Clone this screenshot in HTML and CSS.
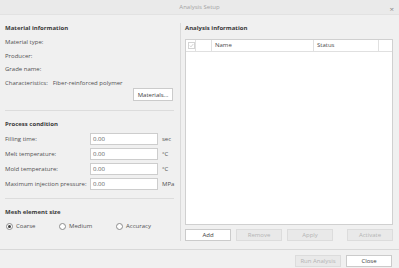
FILE: index.html
```html
<!DOCTYPE html>
<html>
<head>
<meta charset="utf-8">
<title>Analysis Setup</title>
<link rel="stylesheet" href="styles.css">
</head>
<body>
<div class="window">
  <div class="titlebar">
    <span></span>
    <span class="title">Analysis Setup</span>
    <span class="close">&#215;</span>
  </div>
  <div class="main">
    <div class="left">
      <div class="section-title">Material information</div>
      <div class="info-row">Material type:</div>
      <div class="info-row">Producer:</div>
      <div class="info-row">Grade name:</div>
      <div class="info-row"><span class="info-label">Characteristics:</span><span>Fiber-reinforced polymer</span></div>
      <div class="btn-row"><button class="btn btn-materials">Materials...</button></div>
      <div class="divider"></div>
      <div class="section-title">Process condition</div>
      <div class="form">
        <div class="field"><span class="field-label">Filling time:</span><span class="input">0.00</span><span class="unit">sec</span></div>
        <div class="field"><span class="field-label">Melt temperature:</span><span class="input">0.00</span><span class="unit">°C</span></div>
        <div class="field"><span class="field-label">Mold temperature:</span><span class="input">0.00</span><span class="unit">°C</span></div>
        <div class="field"><span class="field-label">Maximum injection pressure:</span><span class="input">0.00</span><span class="unit">MPa</span></div>
      </div>
      <div class="divider divider-mesh"></div>
      <div class="section-title">Mesh element size</div>
      <div class="radios">
        <label class="radio"><span class="radio-dot checked"></span><span>Coarse</span></label>
        <label class="radio"><span class="radio-dot"></span><span>Medium</span></label>
        <label class="radio"><span class="radio-dot"></span><span>Accuracy</span></label>
      </div>
    </div>
    <div class="right">
      <div class="section-title">Analysis information</div>
      <div class="table">
        <div class="thead">
          <div class="th th-check"><span class="checkbox"><svg width="5" height="5" viewBox="0 0 5 5"><path d="M0.8 2.6 L2 3.8 L4.3 1" fill="none" stroke="#c8c8c8" stroke-width="0.8"/></svg></span></div>
          <div class="th"></div>
          <div class="th th-name">Name</div>
          <div class="th th-status">Status</div>
          <div class="th th-last"></div>
        </div>
      </div>
      <div class="table-actions">
        <button class="btn">Add</button>
        <button class="btn disabled">Remove</button>
        <button class="btn disabled">Apply</button>
        <button class="btn disabled btn-activate">Activate</button>
      </div>
    </div>
  </div>
  <div class="footer">
    <button class="btn disabled">Run Analysis</button>
    <button class="btn">Close</button>
  </div>
</div>
</body>
</html>
```

FILE: styles.css
```css
html, body {
  margin: 0;
  padding: 0;
}

body {
  width: 399px;
  height: 268px;
  background: #f0f0f0;
  font-family: "Open Sans", "Noto Sans", sans-serif;
  font-size: 6px;
  color: #505050;
  overflow: hidden;
}

.window {
  display: flex;
  flex-direction: column;
  height: 268px;
}

.titlebar {
  height: 14px;
  border-bottom: 1px solid #e2e2e2;
  background: #eaeaea;
  display: grid;
  grid-template-columns: 1fr auto 1fr;
  align-items: center;
}

.title {
  color: #a4a4a4;
  font-size: 6px;
}

.close {
  justify-self: end;
  margin-right: 5px;
  color: #8a8a8a;
  font-size: 8px;
  line-height: 8px;
  margin-top: 3px;
}

.main {
  flex: 1;
  display: flex;
  padding: 8px 0 8px;
}

.left {
  width: 181px;
  box-sizing: border-box;
  padding: 0 6px 0 5px;
  border-right: 1px solid #dadada;
  display: flex;
  flex-direction: column;
}

.section-title {
  font-weight: bold;
  color: #3a3a3a;
  line-height: 10px;
  height: 10px;
}

.left > .section-title:first-child {
  margin-bottom: 3px;
}

.info-row {
  line-height: 13.5px;
  height: 13.5px;
  white-space: nowrap;
}

.info-label {
  margin-right: 5px;
}

.btn-row {
  display: flex;
  justify-content: flex-end;
  margin-top: -2px;
  padding-right: 1px;
}

.btn {
  font-family: inherit;
  font-size: 6px;
  height: 12px;
  width: 46px;
  padding: 0;
  margin: 0;
  border: 1px solid #cbcbcb;
  background: #ffffff;
  color: #3e3e3e;
  line-height: 10px;
}

.btn-materials {
  width: 40px;
  height: 13px;
}

.btn.disabled {
  background: #e9e9e9;
  border-color: #dcdcdc;
  color: #b4b4b4;
}

.divider {
  height: 1px;
  background: #dcdcdc;
  margin: 9px 0 8px;
}

.form {
  margin-top: 4px;
  display: flex;
  flex-direction: column;
  gap: 3px;
}

.field {
  display: grid;
  grid-template-columns: 85px 68px auto;
  align-items: center;
  height: 12px;
}

.field-label {
  white-space: nowrap;
}

.input {
  box-sizing: border-box;
  height: 12px;
  border: 1px solid #cdcdcd;
  background: #ffffff;
  padding-left: 2px;
  line-height: 10px;
  color: #5a5a5a;
}

.unit {
  padding-left: 4px;
}

.divider-mesh {
  margin-top: 8px;
}

.radios {
  margin-top: 3px;
  display: grid;
  grid-template-columns: 53px 57px auto;
  height: 12px;
  align-items: center;
}

.radio {
  display: flex;
  align-items: center;
  gap: 3.5px;
  padding-left: 0.5px;
}

.radio-dot {
  width: 5px;
  height: 5px;
  border: 1px solid #8c8c8c;
  border-radius: 50%;
  background: #ffffff;
  display: flex;
  align-items: center;
  justify-content: center;
}

.radio-dot.checked::after {
  content: "";
  width: 3px;
  height: 3px;
  border-radius: 50%;
  background: #404040;
}

.right {
  flex: 1;
  padding: 0 6px 0 4px;
  display: flex;
  flex-direction: column;
}

.table {
  flex: 1;
  margin-top: 6px;
  background: #ffffff;
  border: 1px solid #d0d0d0;
}

.thead {
  display: grid;
  grid-template-columns: 10px 16px 102px 65px 1fr;
  height: 11px;
  border-bottom: 1px solid #e0e0e0;
}

.th {
  border-right: 1px solid #e0e0e0;
  line-height: 11px;
  padding-left: 3px;
  color: #4a4a4a;
}

.th-check {
  padding-left: 2px;
  display: flex;
  align-items: center;
}

.th-last {
  border-right: none;
}

.checkbox {
  width: 5px;
  height: 5px;
  border: 1px solid #d4d4d4;
  display: flex;
  align-items: center;
  justify-content: center;
}

.table-actions {
  margin-top: 4px;
  display: flex;
  gap: 5px;
}

.btn-activate {
  margin-left: auto;
}

.footer {
  height: 18px;
  border-top: 1px solid #d8d8d8;
  display: flex;
  justify-content: flex-end;
  gap: 5px;
  padding: 5px 7px 0 0;
  box-sizing: border-box;
  height: 19px;
}
```
